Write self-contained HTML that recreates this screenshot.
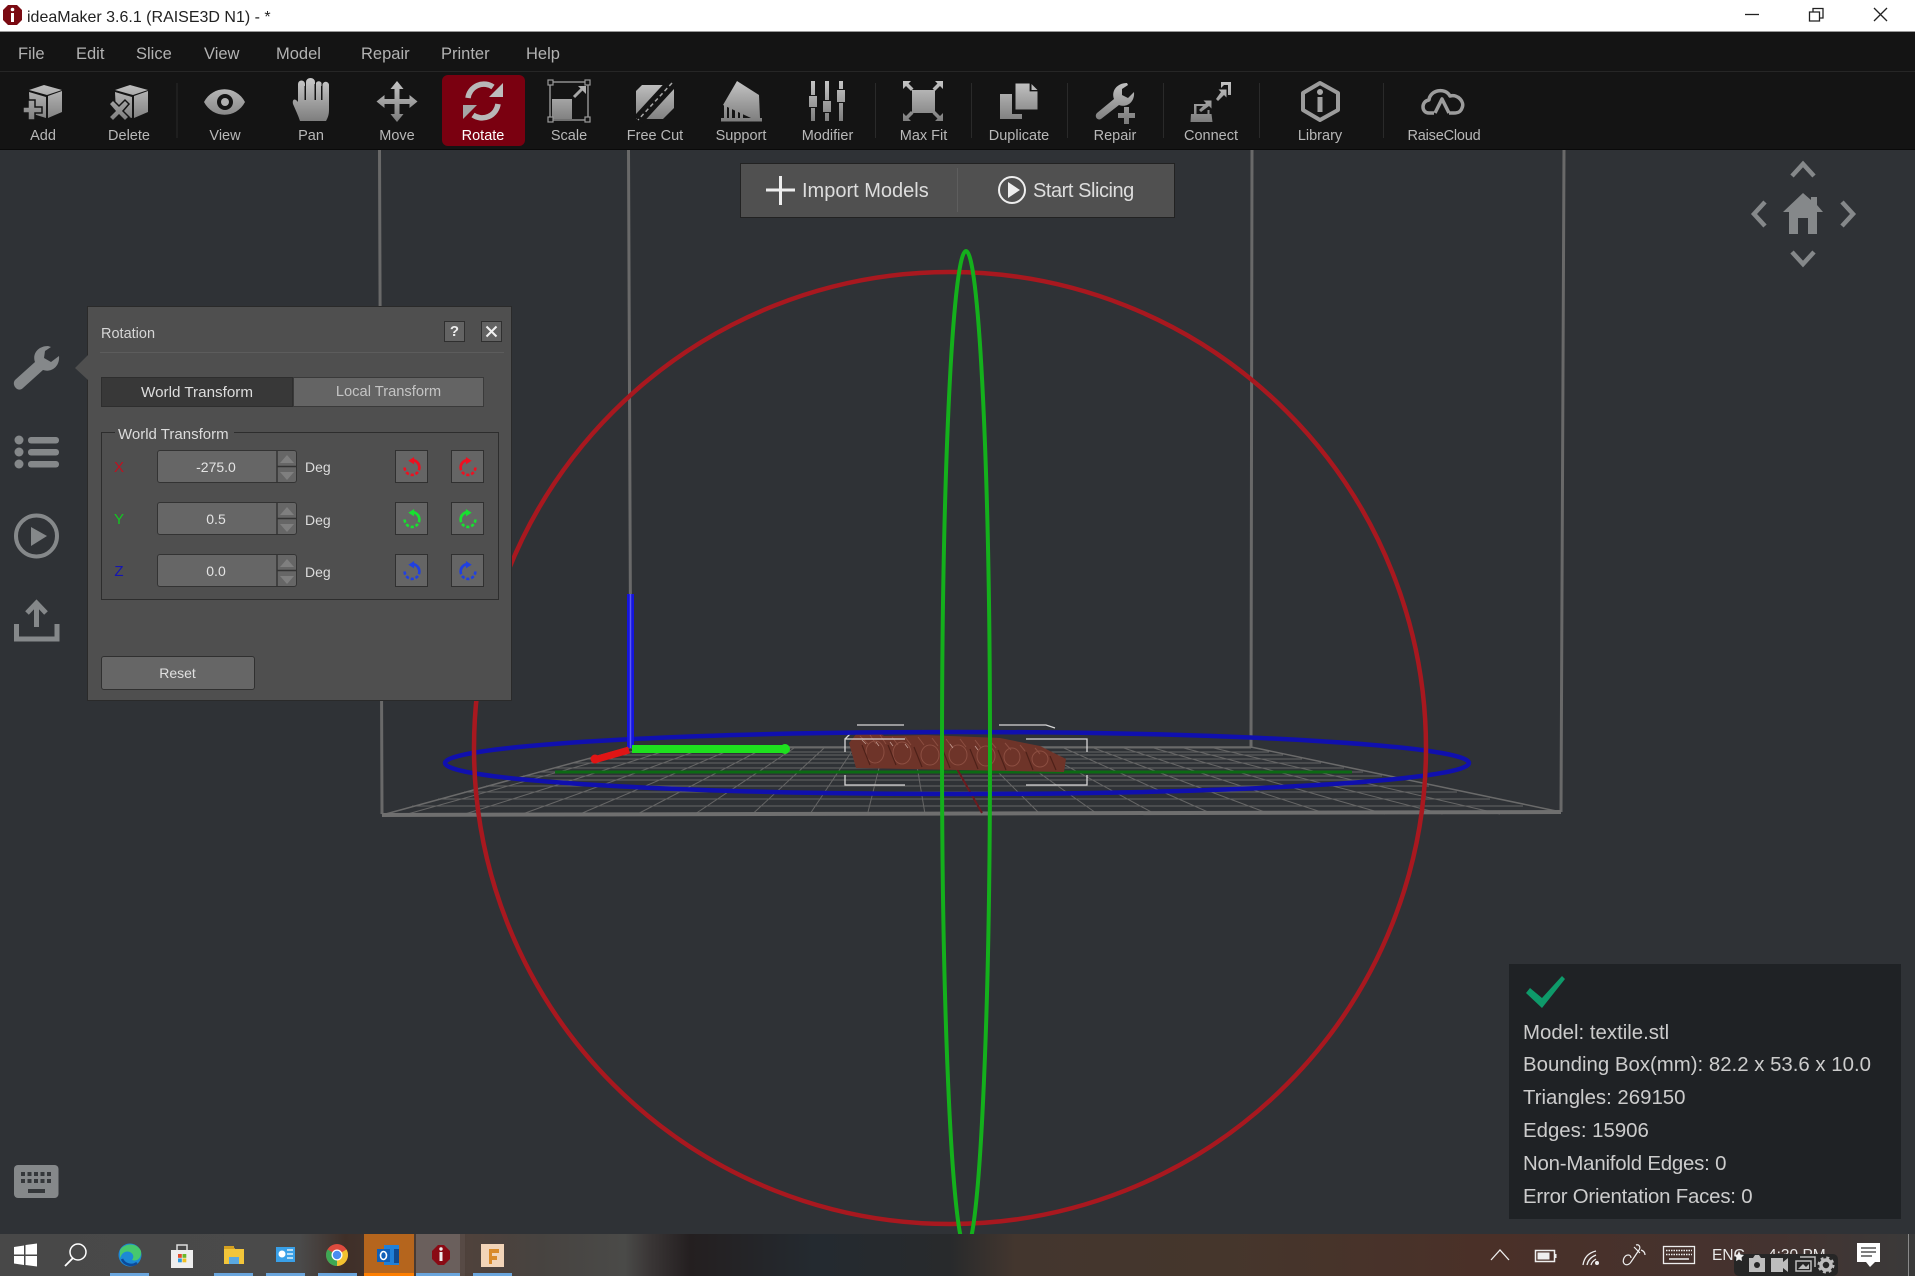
<!DOCTYPE html>
<html><head><meta charset="utf-8"><title>ideaMaker</title>
<style>
html,body{margin:0;padding:0;width:1915px;height:1276px;overflow:hidden;background:#2f3236;font-family:"Liberation Sans",sans-serif}
div{position:absolute;box-sizing:border-box}
.m{top:44px;font-size:16.500px;line-height:20px;color:#b2b2b2;white-space:nowrap}
.t{top:127px;width:110px;margin-left:-55px;text-align:center;font-size:14.500px;line-height:18px;color:#b8b8b8;white-space:nowrap}
.c{display:flex;align-items:center;justify-content:center;white-space:nowrap;font-size:14px}
.i{left:1523px;font-size:20.400px;line-height:26px;color:#ccc;white-space:nowrap}
.inp{left:157px;width:140px;height:33px;background:#666;border:1px solid #333;border-radius:3px}
.ib{width:33px;height:33px;background:#656565;border:1px solid #303030}
svg{position:absolute;left:0;top:0}
</style></head><body>
<div style="left:0;top:0;width:1915px;height:32px;background:#fff;border-bottom:1px solid #999"></div>
<div style="left:27px;top:8px;font-size:16px;line-height:20px;color:#222;white-space:nowrap">ideaMaker 3.6.1 (RAISE3D N1) - *</div>
<div style="left:0;top:32px;width:1915px;height:118px;background:#141414;border-bottom:1px solid #0a0a0a"></div>
<div style="left:0;top:71px;width:1915px;height:1px;background:#262626"></div>
<div class="m" style="left:18px">File</div><div class="m" style="left:76px">Edit</div><div class="m" style="left:136px">Slice</div><div class="m" style="left:204px">View</div><div class="m" style="left:276px">Model</div><div class="m" style="left:361px">Repair</div><div class="m" style="left:441px">Printer</div><div class="m" style="left:526px">Help</div>
<div style="left:442px;top:75px;width:83px;height:71px;background:#7a0010;border-radius:6px"></div>

<svg width="1915" height="1276" viewBox="0 0 1915 1276" style="z-index:1">
<defs>
<linearGradient id="g" gradientUnits="userSpaceOnUse" x1="0" y1="80" x2="0" y2="122"><stop offset="0" stop-color="#c6c6c6"/><stop offset="1" stop-color="#7c7c7c"/></linearGradient>
<symbol id="ccw" viewBox="0 0 20 20"><path d="M3 11a7 7 0 1 0 14 0a7 7 0 0 0-6-7" fill="none" stroke="currentColor" stroke-width="2.500" stroke-dasharray="3 1.800"/><path d="M12 1v7l-5.500-3.500z" fill="currentColor"/><path d="M17 11a7 7 0 0 0-6-7" fill="none" stroke="currentColor" stroke-width="2.500"/></symbol>
<symbol id="cw" viewBox="0 0 20 20"><path d="M17 11a7 7 0 1 1-14 0a7 7 0 0 1 6-7" fill="none" stroke="currentColor" stroke-width="2.500" stroke-dasharray="3 1.800"/><path d="M8 1v7l5.500-3.500z" fill="currentColor"/><path d="M3 11a7 7 0 0 1 6-7" fill="none" stroke="currentColor" stroke-width="2.500"/></symbol>
</defs>
<rect x="0" y="150" width="1915" height="1084" fill="#2f3236"/>
<g stroke="#696969" stroke-width="3" fill="none"><path d="M379.500 150L382 814M628.500 150L631 748M1252 150L1251 748M1564 150L1561 812"/></g>
<g stroke="#666" stroke-width="1" fill="none">
<path d="M627 748H1251M612 752H1269M601 755H1283M586 759H1302M571 763H1321M553 768H1344M538 772H1363M523 776H1382M508 780H1401M486 786H1429M464 792H1457M438 799H1490M412 806H1523"/>
<path d="M407.500 814L644.400 748M465 814L674.300 748M522.500 814L704.300 748M580 814L734.200 748M637.500 814L764.200 748M695 814L794.200 748M752.500 814L824.100 748M810 814L854.100 748M867.500 814L884 748M925 814L914 748M982.500 814L943.900 748M1040 814L973.900 748M1097.500 814L1003.900 748M1155 814L1033.800 748M1212.500 814L1063.800 748M1270 814L1093.700 748M1327.500 814L1123.700 748M1385 814L1153.600 748M1442.500 814L1183.600 748M1500 814L1213.600 748"/>
</g>
<path d="M631 747H1251L1561 812L382 815Z" fill="none" stroke="#6a6a6a" stroke-width="1.500"/>
<path d="M382 815L1561 812" stroke="#6f6f6f" stroke-width="4"/>
<path d="M555 772H1352" stroke="#0c6a14" stroke-width="3"/>
<path d="M957 769L982 813" stroke="#6a1a1e" stroke-width="2"/>
<path d="M849 743L857 733L880 733L884 736L925 735L1000 738L1040 746L1066 759L1064 772L856 768Z" fill="#6e3429"/>
<g fill="none" stroke="#8c4e41" stroke-width="1">
<ellipse cx="875" cy="752" rx="9" ry="11"/><ellipse cx="902" cy="753" rx="9" ry="11"/><ellipse cx="930" cy="755" rx="9" ry="10"/><ellipse cx="958" cy="755" rx="9" ry="10"/><ellipse cx="986" cy="756" rx="9" ry="10"/><ellipse cx="1012" cy="757" rx="8" ry="9"/><ellipse cx="1040" cy="759" rx="8" ry="8"/>
<path d="M860 736l8 8M870 735l6 9M880 735l6 9M892 737l6 8M905 737l6 8M918 737l6 8M932 738l6 8M946 739l6 8M960 739l6 8M975 740l6 8M990 741l6 7M1005 743l6 7M1020 745l5 6M1035 748l5 6"/>
</g>
<g fill="none" stroke="#c09a90" stroke-width=".8"><path d="M862 740l4 4M876 742l3 4M890 742l3 4M905 744l3 4M950 744l3 4M975 746l3 4"/></g>
<g fill="none" stroke="#4e2119" stroke-width="1.200"><path d="M862 745l8 20M888 745l8 20M914 747l8 20M942 748l8 20M970 749l8 20M998 750l8 20M1026 752l7 18M1050 756l6 14"/></g>
<g fill="none" stroke="#d6d6d6" stroke-width="1.300"><path d="M857 725H904M999 725H1046L1055 728M845 752V739H905M1026 739H1087V752M845 775V785H905M1026 785H1087V775M845 739L851 733"/></g>
<ellipse cx="957" cy="763" rx="512" ry="31" fill="none" stroke="#1010ae" stroke-width="4.500"/>
<circle cx="950" cy="748" r="476" fill="none" stroke="#a8181f" stroke-width="4.500"/>
<ellipse cx="966" cy="750" rx="24" ry="499" fill="none" stroke="#14b01c" stroke-width="4"/>
<path d="M630.500 594V748" stroke="#1515dc" stroke-width="7"/><path d="M630.500 594V748" stroke="#5a5aee" stroke-width="1.500"/>
<path d="M632 749H786" stroke="#1ee01e" stroke-width="8"/><circle cx="785" cy="749" r="5" fill="#1ee01e"/>
<path d="M629 750L594 760" stroke="#e01515" stroke-width="7"/><circle cx="595" cy="759" r="4.500" fill="#e01515"/>
<g fill="url(#g)">
<path d="M29 90L44 85L62 90L47 95Z"/><path d="M29 92L46 97V118L30 113Z"/><path d="M48 96L62 91V112L48 118Z"/>
<path d="M28 100h7v7h7v6h-7v7h-7v-7h-5v-6h5z" stroke="#141414" stroke-width="1.500"/>
<path d="M115 90L130 85L148 90L133 95Z"/><path d="M115 92L132 97V118L116 113Z"/><path d="M134 96L148 91V112L134 118Z"/>
<path d="M113 100l6 6l6-6l4 4l-6 7l6 6l-4 4l-6-6l-6 6l-4-4l6-6l-6-7z" stroke="#141414" stroke-width="1.500"/>
<path d="M204 102C213 85 236 85 245 102C236 119 213 119 204 102Z"/>
<path d="M298 84a3.500 3.500 0 0 1 7 0V100h1V82a4.500 4 0 0 1 9 0V100h1V83a3 3 0 0 1 5.500 0V100h1V85a3 3 0 0 1 6.500 0V110C329 116 327 119 326 121H300C298 115 296 111 293 104C292 99 295 98 298 102Z"/>
<path d="M397 81l6.500 8h-4v10h10v-4l8 6.500l-8 6.500v-4h-10v10h4l-6.500 8l-6.500-8h4v-10h-10v4l-8-6.500l8-6.500v4h10v-10h-4z"/>
<rect x="552" y="99" width="20" height="20"/>
<path d="M636 91l6-6h32v23l-11 11h-27z"/>
<path d="M723 105L737 81L759 95L760 118L751 118Z"/>
<rect x="721" y="118" width="41" height="3.500"/>
<path d="M724 105h3v13h-3zM729 108h3v10h-3zM735 110h3v8h-3zM740 113h3v5h-3z"/>
<path d="M811 81h4v14h-4zM811 108h4v13h-4zM809 96h8v11h-8zM825 81h4v19h-4zM825 113h4v8h-4zM823 101h8v11h-8zM839 81h4v8h-4zM839 103h4v18h-4zM837 90h8v12h-8z"/>
<rect x="912" y="90" width="23" height="23"/>
<path d="M903 81h8l-2.500 2.500l5 5l-2.500 2.500l-5-5l-3 3zM943 81h-8l2.500 2.500l-5 5l2.500 2.500l5-5l3 3zM903 121h8l-2.500-2.500l5-5l-2.500-2.500l-5 5l-3-3zM943 121h-8l2.500-2.500l-5-5l2.500-2.500l5 5l3-3z"/>
<path d="M1000 94h12v20h10v5h-22z"/>
<path d="M1015 83h15l8 8v19h-23z" stroke="#141414" stroke-width="1"/>
<path d="M1127 83C1117 83 1111 91 1114 99L1097 113C1094 116 1097 121 1101 119L1119 105C1127 108 1135 102 1134 92L1128 98L1122 95L1122 89L1128 85Z"/>
<path d="M1124 107h5v6h6v5h-6v6h-5v-6h-6v-5h6z"/>
<path d="M1191 114h3v-10h12v2h-9.500v8h11v-4l2 0v4h2l1 8h-22z"/>
<path d="M1201 112l-2-2l7-7l-2.500-2.500h8v8l-2.500-2.500z"/>
<path d="M1216 99l2 2l6-6l2.500 2.500v-8h-8l2.500 2.500z"/>
<path d="M1221 82h10v13h-3v-10h-4l-3 3z"/>
</g>
<path d="M1320 83L1338 93V110L1320 120L1303 110V93Z" fill="none" stroke="#9c9c9c" stroke-width="4" stroke-linejoin="round"/>
<circle cx="1320" cy="92" r="3" fill="#a8a8a8"/><rect x="1317.500" y="97" width="5" height="15" fill="#a0a0a0"/>
<path d="M1434 113H1429C1421 113 1421 101 1429 100C1430 90 1445 87 1450 96C1458 94 1465 102 1462 108C1461 111 1459 113 1454 113H1449M1435 113L1442 99L1449 113" fill="none" stroke="#9c9c9c" stroke-width="3.500" stroke-linejoin="round"/>
<circle cx="225" cy="102" r="8" fill="#141414"/><circle cx="225" cy="102" r="4" fill="#b0b0b0"/>
<path d="M305 100V86M315 100V84M321.500 100V86" stroke="#141414" stroke-width="1"/>
<rect x="550" y="82" width="38" height="38" fill="none" stroke="#8f8f8f" stroke-width="1.500"/>
<path d="M574 97L582 89" stroke="#a8a8a8" stroke-width="3"/><path d="M578 86H586V94Z" fill="#b0b0b0"/>
<g fill="#141414" stroke="#9a9a9a" stroke-width="1.200"><rect x="548" y="80" width="5" height="5"/><rect x="585" y="80" width="5" height="5"/><rect x="548" y="117" width="5" height="5"/><rect x="585" y="117" width="5" height="5"/></g>
<path d="M672 83L638 120" stroke="#141414" stroke-width="11"/>
<path d="M672 83L638 120" stroke="#a8a8a8" stroke-width="1.500" stroke-dasharray="4 3"/>
<path d="M1030 83v8h8z" fill="#141414" stroke="#141414" stroke-width=".8"/><path d="M1031.500 84l6 6h-6z" fill="#b8b8b8"/>
<g fill="none" stroke="#b8b8b8" stroke-width="5.500">
<path d="M468 98A16 16 0 0 1 493 87"/><path d="M498 104A16 16 0 0 1 473 115"/></g>
<path d="M503 83V97H489Z" fill="#bdbdbd"/><path d="M463 119V105H477Z" fill="#a5a5a5"/>
<g stroke="#2a2a2a" stroke-width="1"><path d="M177 83V138M875.500 83V138M971.500 83V138M1067.500 83V138M1163.500 83V138M1259.500 83V138M1383.500 83V138"/></g>
<path d="M8 5L17 5L22 10V20L17 25H8L3 20V10Z" fill="#7a0a12"/><rect x="11" y="13" width="3" height="9" fill="#fff"/><circle cx="12.500" cy="9.500" r="1.800" fill="#fff"/>
<path d="M1745 14.500H1759" stroke="#222" stroke-width="1.300"/>
<path d="M1809.500 12h10v9h-10zM1813 12V8.500h10V18h-3.500" fill="none" stroke="#222" stroke-width="1.300"/>
<path d="M1874 8L1887 21M1887 8L1874 21" stroke="#222" stroke-width="1.300"/>
<g fill="none" stroke="#85888a" stroke-width="4.500"><path d="M1792 176L1803 164L1814 176M1792 252L1803 264L1814 252M1765 202L1754 214L1765 226M1842 202L1853 214L1842 226"/></g>
<path d="M1803 193L1811 200V197H1817V205L1823 212H1817V234H1808V218H1798V234H1789V212H1783Z" fill="#85888a"/>
<g fill="#85888a"><path d="M48 346C38 346 32 354 35 362L15 380C11 385 18 393 23 388L43 370C52 373 60 366 59 356L51 362L44 358L45 351L51 347Z"/>
<circle cx="19" cy="440" r="4.500"/><circle cx="19" cy="452" r="4.500"/><circle cx="19" cy="464" r="4.500"/>
<rect x="28" y="437" width="31" height="6.500" rx="3"/><rect x="28" y="449" width="31" height="6.500" rx="3"/><rect x="28" y="461" width="31" height="6.500" rx="3"/>
<path d="M31 527L47 536L31 546Z"/></g>
<circle cx="36.500" cy="536" r="20.500" fill="none" stroke="#85888a" stroke-width="4"/>
<path d="M16.500 624V639H57V624M36.500 627V604M27 613L36.500 603L46 613" fill="none" stroke="#85888a" stroke-width="5"/>
<rect x="14" y="1165" width="44.500" height="33" rx="4" fill="#85888a"/>
<g fill="#34373a"><rect x="21" y="1172" width="4" height="4"/><rect x="27.500" y="1172" width="4" height="4"/><rect x="34" y="1172" width="4" height="4"/><rect x="40.500" y="1172" width="4" height="4"/><rect x="47" y="1172" width="4" height="4"/><rect x="21" y="1179" width="4" height="4"/><rect x="27.500" y="1179" width="4" height="4"/><rect x="34" y="1179" width="4" height="4"/><rect x="40.500" y="1179" width="4" height="4"/><rect x="47" y="1179" width="4" height="4"/><rect x="28" y="1189" width="17" height="4"/></g>
</svg>

<div style="z-index:2;left:0;top:0;width:0;height:0">
<div class="t" style="left:43px">Add</div><div class="t" style="left:129px">Delete</div><div class="t" style="left:225px">View</div><div class="t" style="left:311px">Pan</div><div class="t" style="left:397px">Move</div><div class="t" style="left:483px;color:#fff">Rotate</div><div class="t" style="left:569px">Scale</div><div class="t" style="left:655px">Free Cut</div><div class="t" style="left:741px">Support</div><div class="t" style="left:827.500px">Modifier</div><div class="t" style="left:923.500px">Max Fit</div><div class="t" style="left:1019px">Duplicate</div><div class="t" style="left:1115px">Repair</div><div class="t" style="left:1211px">Connect</div><div class="t" style="left:1320px">Library</div><div class="t" style="left:1444px;letter-spacing:-.2px">RaiseCloud</div>
</div>

<div style="z-index:2;left:740px;top:163px;width:435px;height:55px;background:#505050;border:1px solid #222"></div>
<div style="z-index:2;left:957px;top:168px;width:1px;height:44px;background:#5e5e5e"></div>
<div style="z-index:2;left:802px;top:179px;font-size:20px;line-height:24px;color:#ddd;white-space:nowrap">Import Models</div>
<div style="z-index:2;left:1033px;top:179px;font-size:20px;line-height:24px;color:#ddd;white-space:nowrap;letter-spacing:-.45px">Start Slicing</div>
<svg width="1915" height="1276" style="z-index:3;pointer-events:none">
<path d="M766 190H795M780.500 176V205" stroke="#eee" stroke-width="3"/>
<circle cx="1012" cy="190" r="13" fill="none" stroke="#eee" stroke-width="2"/><path d="M1008 182L1020 190L1008 198Z" fill="#eee"/>
</svg>

<div style="z-index:4;left:87px;top:306px;width:425px;height:395px;background:#4f4f4f;border:1px solid #2a2a2a"></div>
<svg width="1915" height="1276" style="z-index:4"><path d="M88 355L75 368L88 380Z" fill="#4f4f4f"/></svg>
<div style="z-index:5;left:0;top:0;width:0;height:0">
<div style="left:101px;top:325px;font-size:14.500px;line-height:18px;color:#d6d6d6">Rotation</div>
<div style="left:100px;top:352px;width:404px;height:1px;background:#5c5c5c"></div>
<div class="c" style="left:444px;top:321px;width:21px;height:21px;background:#636363;border:1px solid #2f2f2f;color:#eee;font-size:15px;font-weight:bold">?</div>
<div class="c" style="left:481px;top:321px;width:21px;height:21px;background:#636363;border:1px solid #2f2f2f"></div>
<div class="c" style="left:101px;top:377px;width:192px;height:30px;background:#383838;border:1px solid #2e2e2e;color:#ddd;font-size:15.200px">World Transform</div>
<div class="c" style="left:293px;top:377px;width:191px;height:30px;background:#646464;border:1px solid #3a3a3a;color:#c4c4c4;font-size:14.700px">Local Transform</div>
<div style="left:101px;top:432px;width:398px;height:168px;border:1px solid #2d2d2d"></div>
<div style="left:115px;top:425px;width:119px;height:18px;background:#4f4f4f"></div>
<div style="left:118px;top:426px;font-size:15px;line-height:18px;color:#dcdcdc;white-space:nowrap">World Transform</div>

<div class="c" style="left:109px;top:458px;width:20px;height:18px;color:#c01020;font-size:15px">X</div>
<div class="c" style="left:109px;top:510px;width:20px;height:18px;color:#12c820;font-size:15px">Y</div>
<div class="c" style="left:109px;top:562px;width:20px;height:18px;color:#1515b4;font-size:15px">Z</div>

<div class="inp" style="top:450px"></div><div class="inp" style="top:502px"></div><div class="inp" style="top:554px"></div>
<div class="c" style="left:157px;top:451px;width:118px;height:31px;color:#e4e4e4">-275.0</div>
<div class="c" style="left:157px;top:503px;width:118px;height:31px;color:#e4e4e4">0.5</div>
<div class="c" style="left:157px;top:555px;width:118px;height:31px;color:#e4e4e4">0.0</div>
<div class="c" style="left:305px;top:458px;height:18px;color:#dcdcdc">Deg</div>
<div class="c" style="left:305px;top:511px;height:18px;color:#dcdcdc">Deg</div>
<div class="c" style="left:305px;top:563px;height:18px;color:#dcdcdc">Deg</div>

<div class="ib" style="left:395px;top:450px"></div><div class="ib" style="left:451px;top:450px"></div>
<div class="ib" style="left:395px;top:502px"></div><div class="ib" style="left:451px;top:502px"></div>
<div class="ib" style="left:395px;top:554px"></div><div class="ib" style="left:451px;top:554px"></div>

<div class="c" style="left:101px;top:656px;width:154px;height:34px;background:#666;border:1px solid #303030;border-radius:3px;color:#e0e0e0"><span style="margin-left:-1px">Reset</span></div>
</div>
<svg width="1915" height="1276" style="z-index:6">
<path d="M486.500 326.500L496.500 336.500M496.500 326.500L486.500 336.500" stroke="#f2f2f2" stroke-width="2"/>
<g stroke="#333" stroke-width="1.500"><path d="M277 450.500V483M277 502.500V535M277 554.500V587M277 466.500H297M277 518.500H297M277 570.500H297"/></g>
<g fill="#7f7f7f"><path d="M287 455L294 463H280ZM287 480L294 472H280ZM287 507L294 515H280ZM287 532L294 524H280ZM287 559L294 567H280ZM287 584L294 576H280Z"/></g>
<use href="#ccw" x="401.500" y="456" width="21" height="21" color="#ee1020"/><use href="#cw" x="457.500" y="456" width="21" height="21" color="#ee1020"/>
<use href="#ccw" x="401.500" y="508" width="21" height="21" color="#18e030"/><use href="#cw" x="457.500" y="508" width="21" height="21" color="#18e030"/>
<use href="#ccw" x="401.500" y="560" width="21" height="21" color="#2040e0"/><use href="#cw" x="457.500" y="560" width="21" height="21" color="#2040e0"/>
</svg>

<div style="z-index:2;left:1509px;top:964px;width:392px;height:255px;background:#1f2225"></div>
<svg width="1915" height="1276" style="z-index:3"><path d="M1526 993L1530 988L1542 998L1562 976L1565 979L1542 1008Z" fill="#0e9a6a"/></svg>
<div style="z-index:3;left:0;top:0;width:0;height:0">
<div class="i" style="top:1020px">Model: textile.stl</div>
<div class="i" style="top:1052px">Bounding Box(mm): 82.2 x 53.6 x 10.0</div>
<div class="i" style="top:1085px">Triangles: 269150</div>
<div class="i" style="top:1118px">Edges: 15906</div>
<div class="i" style="top:1151px;letter-spacing:-.2px">Non-Manifold Edges: 0</div>
<div class="i" style="top:1184px;letter-spacing:-.2px">Error Orientation Faces: 0</div>
</div>

<div style="z-index:7;left:0;top:1234px;width:1915px;height:42px;background:linear-gradient(to right,#484848 0,#4a4a4a 300px,#3f2f28 345px,#4f423c 470px,#474340 540px,#4a4a48 625px,#3a3636 650px,#241f20 690px,#242a30 815px,#282a2c 950px,#43362e 1015px,#45362c 1220px,#4a3028 1490px,#443330 1780px,#3a3a3a 1915px)"></div>
<div style="z-index:7;left:364px;top:1234px;width:50px;height:42px;background:#b5651d"></div>
<div style="z-index:7;left:416px;top:1234px;width:44px;height:42px;background:#6a5f5c"></div>
<div style="z-index:7;left:460px;top:1234px;width:5px;height:42px;background:#574a45"></div>
<div style="z-index:7;left:1712px;top:1246px;font-size:15.500px;line-height:20px;color:#e8e8e8">ENG</div>
<div style="z-index:7;left:1768px;top:1246px;font-size:15.500px;line-height:20px;color:#e8e8e8;white-space:nowrap">4:30 PM</div>
<svg width="1915" height="1276" style="z-index:8">
<g fill="#6aa5dc"><rect x="110" y="1273" width="39" height="3"/><rect x="214" y="1273" width="39" height="3"/><rect x="266" y="1273" width="39" height="3"/><rect x="318" y="1273" width="39" height="3"/><rect x="416" y="1273" width="44" height="3"/><rect x="473" y="1273" width="39" height="3"/></g>
<rect x="364" y="1273" width="50" height="3" fill="#ff7f00"/>
<path d="M14 1247L24 1245.500V1254.500H14ZM25.500 1245L37 1243.500V1254.500H25.500ZM14 1256H24V1265L14 1263.500ZM25.500 1256H37V1266.500L25.500 1265Z" fill="#fff"/>
<circle cx="78" cy="1252" r="8" fill="none" stroke="#fff" stroke-width="1.500"/><path d="M73 1258L65 1266" stroke="#fff" stroke-width="1.800"/>
<circle cx="130" cy="1255" r="11.500" fill="#1c8ad6"/><path d="M120 1250C124 1243 137 1242 141 1251C142 1258 137 1262 132 1260C136 1255 130 1250 125 1252C122 1253 121 1256 120 1258Z" fill="#46c86e"/><path d="M122 1259C124 1264 131 1267 137 1263" fill="none" stroke="#0c4a9a" stroke-width="2.500"/>
<path d="M171 1250H193V1268H171Z" fill="#eee"/><path d="M177 1250V1245H187V1250" fill="none" stroke="#ddd" stroke-width="1.500"/><rect x="178" y="1254" width="3.800" height="3.800" fill="#e24a2a"/><rect x="182.500" y="1254" width="3.800" height="3.800" fill="#6ab82a"/><rect x="178" y="1258.500" width="3.800" height="3.800" fill="#2a9ae2"/><rect x="182.500" y="1258.500" width="3.800" height="3.800" fill="#f0c020"/>
<path d="M224 1246H233L235 1249H244V1264H224Z" fill="#f2c53a"/><rect x="224" y="1246" width="10" height="3" fill="#d4a020"/><rect x="229" y="1257" width="10" height="7" fill="#5aa8e0"/>
<rect x="276" y="1247" width="19" height="15" fill="#39a0e8"/><circle cx="282" cy="1254" r="3.500" fill="#fff"/><path d="M287 1250h6M287 1254h6M287 1258h6" stroke="#fff" stroke-width="1.300"/>
<circle cx="337" cy="1255" r="11" fill="#dd4b3e"/><path d="M337 1255L346.500 1249.500A11 11 0 0 1 337 1266Z" fill="#f2c230"/><path d="M337 1255V1266A11 11 0 0 1 327.500 1249.500Z" fill="#3da854"/><circle cx="337" cy="1255" r="5.500" fill="#fff"/><circle cx="337" cy="1255" r="4.200" fill="#4a8cf0"/>
<rect x="384" y="1245" width="15" height="20" fill="#2080d8"/><rect x="394" y="1249" width="5" height="14" fill="#104a90"/><rect x="377" y="1249" width="13" height="13" fill="#0f5fb8"/><ellipse cx="383.500" cy="1255.500" rx="3" ry="4" fill="none" stroke="#fff" stroke-width="1.600"/>
<path d="M438 1245H444L450 1251V1259L444 1265H438L432 1259V1251Z" fill="#8a0a14"/><rect x="439.500" y="1252" width="3" height="9" fill="#eee"/><circle cx="441" cy="1249" r="1.700" fill="#eee"/>
<rect x="481" y="1244" width="23" height="23" fill="#f2d4b8"/><path d="M489 1249H499V1253H492V1256H497V1260H492V1264H489Z" fill="#d98a2a"/>
<path d="M1491 1260L1500 1250L1509 1260" fill="none" stroke="#eee" stroke-width="1.300"/>
<rect x="1535.500" y="1250.500" width="19" height="11" fill="none" stroke="#eee" stroke-width="1.500"/><rect x="1537.500" y="1252.500" width="12" height="7" fill="#eee"/><rect x="1555" y="1254" width="1.500" height="4" fill="#eee"/>
<path d="M1583 1265C1584 1258 1588 1253 1596 1251M1587 1265C1588 1260 1591 1257 1596 1255M1591 1265C1592 1262 1593 1261 1596 1259" fill="none" stroke="#eee" stroke-width="1.300"/><circle cx="1597" cy="1263" r="2" fill="#eee"/>
<path d="M1636 1245C1639 1244 1641 1247 1639 1250L1631 1262C1628 1267 1621 1265 1624 1258C1626 1254 1631 1254 1631 1258M1634 1247L1640 1253M1641 1250C1644 1251 1645 1253 1645 1255" fill="none" stroke="#eee" stroke-width="1.200"/>
<rect x="1663.500" y="1246.500" width="31" height="17" fill="none" stroke="#eee" stroke-width="1.300"/><path d="M1666 1250.500H1692M1666 1254.500H1692" stroke="#eee" stroke-width="1.500" stroke-dasharray="1.500 1"/><path d="M1669 1259H1689" stroke="#eee" stroke-width="1.500"/>
<rect x="1734" y="1254" width="104" height="22" rx="5" fill="#262626"/>
<path d="M1739 1251L1740.500 1254.500L1744 1255L1741.500 1257.500L1742 1261L1739 1259.500L1736 1261L1736.500 1257.500L1734 1255L1737.500 1254.500Z" fill="#eee"/>
<g fill="#bdbdbd"><path d="M1749 1258H1753L1755 1255H1759L1761 1258H1765V1272H1749Z"/><path d="M1771 1258H1783V1262L1788 1258V1272L1783 1268V1272H1771Z"/><path d="M1796 1261H1811V1271H1796Z" fill="none" stroke="#bdbdbd" stroke-width="1.500"/><path d="M1800 1257H1815V1267" fill="none" stroke="#bdbdbd" stroke-width="1.500"/><path d="M1798 1269L1803 1264L1806 1267L1809 1264V1269Z"/></g>
<circle cx="1757" cy="1265" r="3" fill="#262626"/>
<circle cx="1826" cy="1265" r="5" fill="none" stroke="#bdbdbd" stroke-width="3.500"/><circle cx="1826" cy="1265" r="7.500" fill="none" stroke="#bdbdbd" stroke-width="2" stroke-dasharray="3 2.900"/>
<path d="M1857 1243H1880V1262H1875L1870 1267L1866 1262H1857Z" fill="#fff"/><path d="M1861 1248H1876M1861 1252H1876M1861 1256H1872" stroke="#333" stroke-width="1.300"/>
<rect x="1908" y="1234" width="1" height="42" fill="#8a8a8a"/>
</svg>
</body></html>
